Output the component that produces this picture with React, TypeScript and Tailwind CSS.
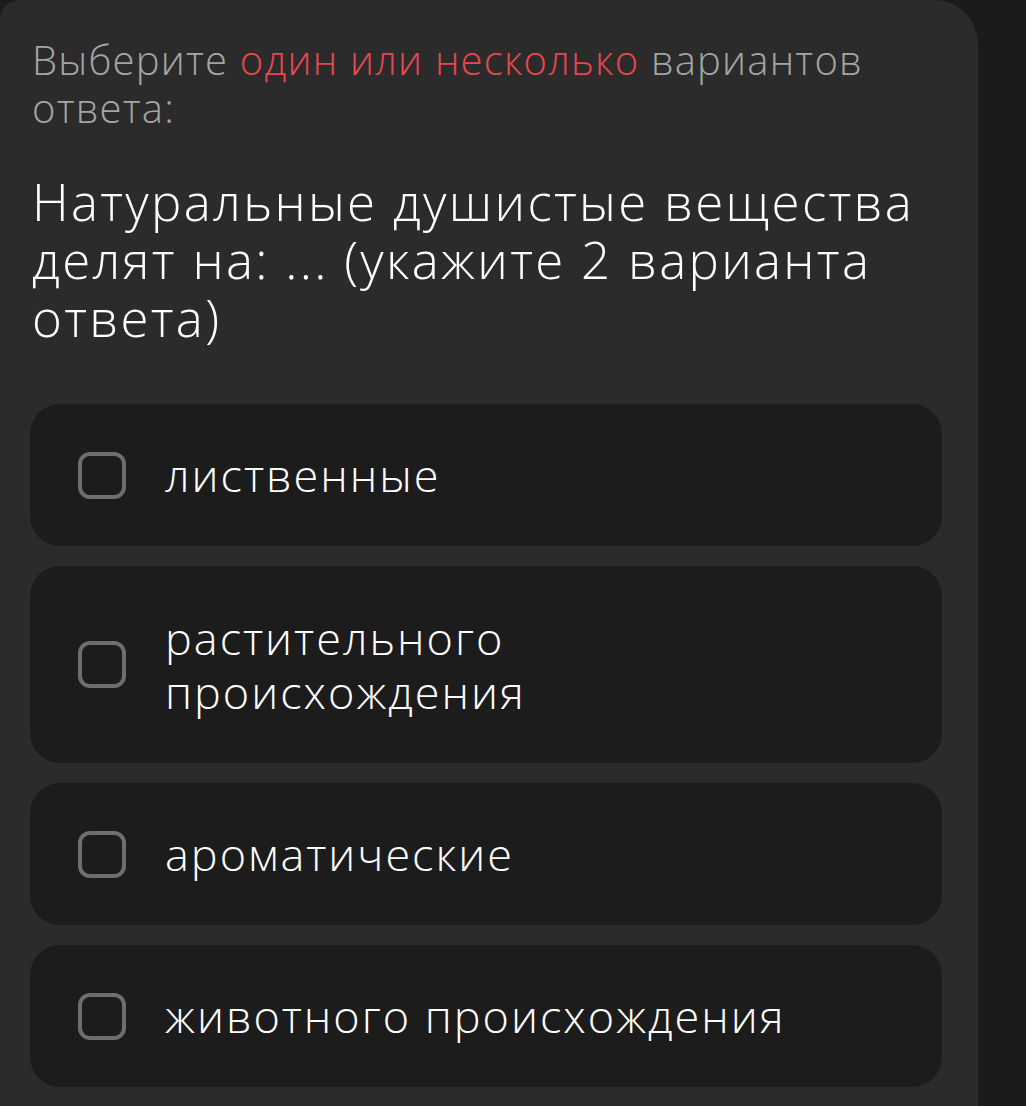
const OPTIONS = [
  "лиственные",
  "растительного происхождения",
  "ароматические",
  "животного происхождения",
];

function Option({ label, tall }: { label: string; tall?: boolean }) {
  return (
    <label
      className={`flex items-center gap-[39px] rounded-[30px] bg-[#1c1c1c] pl-[48px] pr-[40px] ${
        tall ? "h-[197px]" : "h-[142px]"
      }`}
    >
      <span className="block h-[47px] w-[48px] shrink-0 rounded-[12px] border-[4px] border-[#6e6e6e]" />
      <span
        className={`text-[45px] leading-[54px] tracking-[2px] text-white ${tall ? "max-w-[460px]" : ""}`}
      >
        {label}
      </span>
    </label>
  );
}

export default function App() {
  return (
    <div
      className="min-h-[1106px] w-[1026px] overflow-hidden bg-[#1b1b1b] font-light"
      style={{ fontFamily: "'Open Sans', 'Noto Sans', sans-serif" }}
    >
      <div className="w-[978px] min-h-[1106px] rounded-tr-[44px] rounded-tl-[20px] bg-[#2b2b2b] pl-[32px] pr-[36px] pt-[36px]">
        <p className="text-[40px] leading-[48px] tracking-[1.2px] text-[#a5a5a5]">
          Выберите <span className="text-[#e3474f]">один или несколько</span> вариантов ответа:
        </p>
        <h1 className="mt-[40px] text-[51px] leading-[58px] tracking-[2.3px] text-white">
          Натуральные душистые вещества делят на: ... (укажите 2 варианта ответа)
        </h1>
        <div className="mt-[58px] -ml-[2px] flex flex-col gap-[20px]">
          {OPTIONS.map((o, i) => (
            <Option key={o} label={o} tall={i === 1} />
          ))}
        </div>
      </div>
    </div>
  );
}
